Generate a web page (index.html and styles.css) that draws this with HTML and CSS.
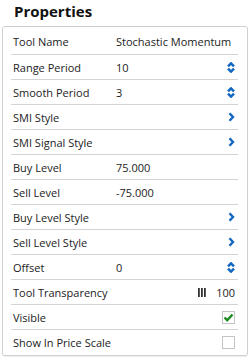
FILE: index.html
```html
<!DOCTYPE html>
<html>
<head>
<meta charset="utf-8">
<link rel="stylesheet" href="styles.css">
</head>
<body>
<div class="panel">
  <h1 class="title">Properties</h1>
  <div class="box">
    <div class="row"><span class="label">Tool Name</span><span class="value">Stochastic Momentum</span></div>
    <div class="row"><span class="label">Range Period</span><span class="value">10</span>
      <svg class="spin" width="8" height="11" viewBox="0 0 8 11"><path d="M1 4.4 L4 1.4 L7 4.4 M1 6.6 L4 9.6 L7 6.6" fill="none" stroke="#1267c0" stroke-width="2.5"/></svg></div>
    <div class="row"><span class="label">Smooth Period</span><span class="value">3</span>
      <svg class="spin" width="8" height="11" viewBox="0 0 8 11"><path d="M1 4.4 L4 1.4 L7 4.4 M1 6.6 L4 9.6 L7 6.6" fill="none" stroke="#1267c0" stroke-width="2.5"/></svg></div>
    <div class="row"><span class="label">SMI Style</span>
      <svg class="chev" width="7" height="10" viewBox="0 0 7 10"><path d="M1.5 1.2 L5 5 L1.5 8.8" fill="none" stroke="#1267c0" stroke-width="2.4"/></svg></div>
    <div class="row"><span class="label">SMI Signal Style</span>
      <svg class="chev" width="7" height="10" viewBox="0 0 7 10"><path d="M1.5 1.2 L5 5 L1.5 8.8" fill="none" stroke="#1267c0" stroke-width="2.4"/></svg></div>
    <div class="row"><span class="label">Buy Level</span><span class="value">75.000</span></div>
    <div class="row"><span class="label">Sell Level</span><span class="value">-75.000</span></div>
    <div class="row"><span class="label">Buy Level Style</span>
      <svg class="chev" width="7" height="10" viewBox="0 0 7 10"><path d="M1.5 1.2 L5 5 L1.5 8.8" fill="none" stroke="#1267c0" stroke-width="2.4"/></svg></div>
    <div class="row"><span class="label">Sell Level Style</span>
      <svg class="chev" width="7" height="10" viewBox="0 0 7 10"><path d="M1.5 1.2 L5 5 L1.5 8.8" fill="none" stroke="#1267c0" stroke-width="2.4"/></svg></div>
    <div class="row"><span class="label">Offset</span><span class="value">0</span>
      <svg class="spin" width="8" height="11" viewBox="0 0 8 11"><path d="M1 4.4 L4 1.4 L7 4.4 M1 6.6 L4 9.6 L7 6.6" fill="none" stroke="#1267c0" stroke-width="2.5"/></svg></div>
    <div class="row"><span class="label">Tool Transparency</span>
      <span class="trans"><svg width="8" height="9" viewBox="0 0 8 9"><rect x="0" y="0" width="1.8" height="9" fill="#333"/><rect x="3" y="0" width="1.8" height="9" fill="#333"/><rect x="6" y="0" width="1.8" height="9" fill="#333"/></svg><span class="tval">100</span></span></div>
    <div class="row"><span class="label">Visible</span>
      <span class="check"><svg width="11" height="11" viewBox="0 0 11 11"><path d="M1.5 5.5 L4.2 8.2 L9.5 2.5" fill="none" stroke="#1e8a1e" stroke-width="2.4"/></svg></span></div>
    <div class="row last"><span class="label">Show In Price Scale</span><span class="check"></span></div>
  </div>
</div>
</body>
</html>
```
FILE: styles.css
```css
html, body {
  margin: 0;
  padding: 0;
  background: #fff;
}
body {
  font-family: "Open Sans", "Noto Sans", sans-serif;
  color: #222;
  width: 251px;
  height: 363px;
  overflow: hidden;
}
.panel {
  padding: 0 3px 0 2px;
}
.title {
  margin: 0;
  padding: 1px 0 0 12px;
  height: 26px;
  box-sizing: border-box;
  font-size: 15px;
  font-weight: 700;
  line-height: 20px;
  color: #111;
}
.box {
  border: 1px solid #cfcfcf;
  border-radius: 3px;
  box-shadow: 0 1px 1px rgba(0,0,0,0.08);
  padding: 2px 9px 1px 8px;
  height: 330px;
  box-sizing: border-box;
}
.row {
  display: flex;
  align-items: center;
  height: 25px;
  border-bottom: 1px solid #d3d3d3;
  box-sizing: border-box;
  font-size: 11px;
  padding-left: 2px;
  padding-right: 3px;
}
.row:first-child {
  height: 26px;
}
.row.last {
  border-bottom: none;
}
.label {
  width: 103px;
  flex: none;
  white-space: nowrap;
}
.value {
  flex: 1;
  white-space: nowrap;
  overflow: hidden;
}
.spin, .chev {
  margin-left: auto;
  flex: none;
}
.chev { margin-right: 0; }
.trans {
  margin-left: auto;
  display: flex;
  align-items: center;
  gap: 10px;
}
.check {
  margin-left: auto;
  width: 11px;
  height: 11px;
  border: 1px solid #c4c4c4;
  display: flex;
  align-items: center;
  justify-content: center;
  background: #fff;
}
.check svg { display: block; }
```
